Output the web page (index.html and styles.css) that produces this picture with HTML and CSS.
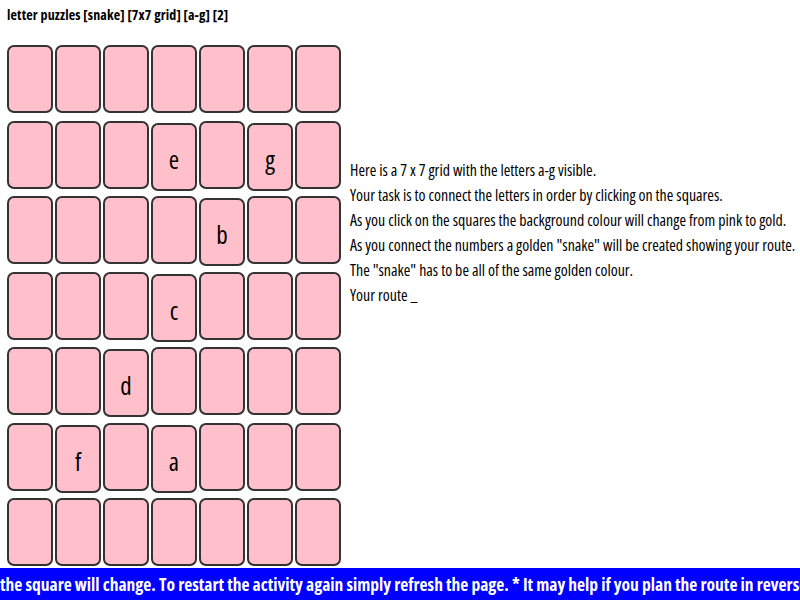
FILE: index.html
```html
<!DOCTYPE html>
<html>
<head>
<meta charset="utf-8">
<link rel="stylesheet" href="styles.css">
</head>
<body>
<h1 class="title">letter puzzles [snake] [7x7 grid] [a-g] [2]</h1>
<div class="main">
  <div class="grid">
    <div class="cell"></div><div class="cell"></div><div class="cell"></div><div class="cell"></div><div class="cell"></div><div class="cell"></div><div class="cell"></div>
    <div class="cell"></div><div class="cell"></div><div class="cell"></div><div class="cell letter">e</div><div class="cell"></div><div class="cell letter">g</div><div class="cell"></div>
    <div class="cell"></div><div class="cell"></div><div class="cell"></div><div class="cell"></div><div class="cell letter">b</div><div class="cell"></div><div class="cell"></div>
    <div class="cell"></div><div class="cell"></div><div class="cell"></div><div class="cell letter">c</div><div class="cell"></div><div class="cell"></div><div class="cell"></div>
    <div class="cell"></div><div class="cell"></div><div class="cell letter">d</div><div class="cell"></div><div class="cell"></div><div class="cell"></div><div class="cell"></div>
    <div class="cell"></div><div class="cell letter">f</div><div class="cell"></div><div class="cell letter">a</div><div class="cell"></div><div class="cell"></div><div class="cell"></div>
    <div class="cell"></div><div class="cell"></div><div class="cell"></div><div class="cell"></div><div class="cell"></div><div class="cell"></div><div class="cell"></div>
  </div>
  <div class="info">
    <p>Here is a 7 x 7 grid with the letters a-g visible.</p>
    <p>Your task is to connect the letters in order by clicking on the squares.</p>
    <p>As you click on the squares the background colour will change from pink to gold.</p>
    <p>As you connect the numbers a golden "snake" will be created showing your route.</p>
    <p>The "snake" has to be all of the same golden colour.</p>
    <p>Your route _</p>
  </div>
</div>
<div class="ticker"><span class="ticker-text">the square will change. To restart the activity again simply refresh the page. * It may help if you plan the route in reverse.</span></div>
</body>
</html>
```
FILE: styles.css
```css
html, body {
  margin: 0;
  padding: 0;
  background: #ffffff;
  overflow: hidden;
}
body {
  width: 800px;
  height: 600px;
  font-family: "Open Sans", sans-serif;
  font-stretch: 75%;
}
.title {
  margin: 0;
  padding: 6px 0 0 7px;
  height: 45px;
  box-sizing: border-box;
  font-family: "Open Sans", sans-serif;
  font-stretch: 75%;
  font-weight: bold;
  font-size: 14px;
  line-height: 18px;
  letter-spacing: 0.15px;
  color: #000;
}
.main {
  display: flex;
  align-items: flex-start;
  padding-left: 7px;
}
.grid {
  display: grid;
  grid-template-columns: repeat(7, 46px);
  grid-template-rows: repeat(7, 68px);
  column-gap: 2px;
  row-gap: 7.5px;
}
.cell {
  box-sizing: border-box;
  width: 46px;
  height: 68px;
  background: #ffc0cb;
  border: 2px solid #333;
  border-radius: 7px;
  display: flex;
  justify-content: center;
  align-items: center;
  font-size: 25px;
  color: #000;
}
.cell.letter {
  margin-top: 2px;
  padding-top: 4px;
}
.info {
  padding-left: 9px;
  padding-top: 113px;
  font-size: 15.9px;
  line-height: 25px;
  color: #000;
}
.info p {
  margin: 0;
  white-space: nowrap;
}
.ticker {
  margin-top: 2px;
  height: 32px;
  background: #0000ff;
  overflow: hidden;
  white-space: nowrap;
}
.ticker-text {
  display: block;
  color: #fff;
  font-weight: bold;
  font-size: 17.5px;
  line-height: 32px;
}
```
